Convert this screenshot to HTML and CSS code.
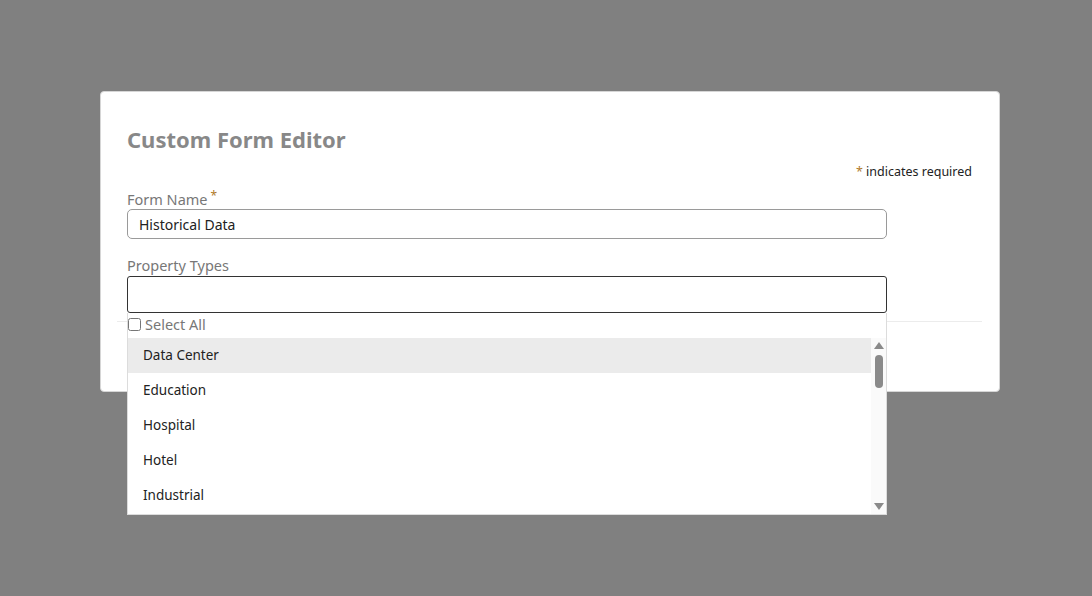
FILE: index.html
```html
<!DOCTYPE html>
<html>
<head>
<meta charset="utf-8">
<link rel="stylesheet" href="styles.css">
</head>
<body>
<div class="dialog">
  <h1 class="title">Custom Form Editor</h1>
  <div class="required-note"><span class="star">*</span> indicates required</div>
  <div class="field">
    <label class="label">Form Name<sup class="star">*</sup></label>
    <input class="text-input" type="text" value="Historical Data">
  </div>
  <div class="field field-types">
    <label class="label">Property Types</label>
    <div class="multi-input"></div>
    <div class="dropdown">
      <label class="select-all"><input type="checkbox" class="check"> Select All</label>
      <div class="list-wrap">
        <ul class="options">
          <li class="option active">Data Center</li>
          <li class="option">Education</li>
          <li class="option">Hospital</li>
          <li class="option">Hotel</li>
          <li class="option">Industrial</li>
        </ul>
        <div class="scrollbar">
          <span class="arrow-up"></span>
          <span class="thumb"></span>
          <span class="arrow-down"></span>
        </div>
      </div>
    </div>
  </div>
  <div class="separator"></div>
</div>
</body>
</html>
```

FILE: styles.css
```css
html, body {
  margin: 0;
  padding: 0;
}
body {
  background: #808080;
  font-family: "Noto Sans", "Open Sans", sans-serif;
  height: 596px;
  overflow: hidden;
}
.dialog {
  box-sizing: border-box;
  margin: 91px 0 0 100px;
  width: 900px;
  height: 301px;
  background: #fff;
  border: 1px solid #d6d6d6;
  border-radius: 4px;
  padding: 32px 27px 0 26px;
}
.title {
  margin: 0;
  font-size: 22px;
  line-height: 30px;
  font-weight: 700;
  color: #888;
}
.required-note {
  margin-top: 9px;
  text-align: right;
  font-size: 12.5px;
  line-height: 18px;
  color: #222;
}
.star {
  color: #b07a2a;
}
.field {
  width: 760px;
  position: relative;
}
.label {
  display: block;
  font-size: 14.5px;
  line-height: 20px;
  color: #777;
  margin-top: 8px;
}
.label sup {
  font-size: 12px;
  line-height: 0;
  margin-left: 3px;
  vertical-align: 5px;
}
.text-input {
  box-sizing: border-box;
  display: block;
  width: 760px;
  height: 30px;
  margin: 0;
  padding: 0 11px;
  border: 1px solid #9a9a9a;
  border-radius: 5px;
  font-family: inherit;
  font-size: 14px;
  color: #222;
  outline: none;
}
.field-types .label {
  margin-top: 16px;
}
.multi-input {
  box-sizing: border-box;
  height: 37px;
  margin-top: 1px;
  border: 1px solid #333;
  border-radius: 3px;
  background: #fff;
}
.dropdown {
  position: absolute;
  top: 100%;
  left: 0;
  width: 760px;
  box-sizing: border-box;
  border: 1px solid #dcdcdc;
  border-top: none;
  background: #fff;
  z-index: 5;
}
.select-all {
  display: flex;
  align-items: center;
  box-sizing: border-box;
  height: 25px;
  padding-bottom: 3px;
  font-size: 14.5px;
  color: #777;
  gap: 4px;
}
.check {
  margin: 0;
  width: 13px;
  height: 13px;
}
.list-wrap {
  display: flex;
  height: 176px;
}
.options {
  flex: 1;
  list-style: none;
  margin: 0;
  padding: 0;
}
.option {
  height: 35px;
  line-height: 35px;
  padding-left: 15px;
  font-size: 13.5px;
  color: #222;
}
.option.active {
  background: #ebebeb;
}
.scrollbar {
  width: 15px;
  background: #fafafa;
  display: flex;
  flex-direction: column;
  align-items: center;
}
.arrow-up {
  margin-top: 4px;
  width: 0;
  height: 0;
  border-left: 5px solid transparent;
  border-right: 5px solid transparent;
  border-bottom: 7px solid #8a8a8a;
}
.thumb {
  margin-top: 6px;
  width: 8px;
  height: 33px;
  border-radius: 4px;
  background: #8a8a8a;
}
.arrow-down {
  margin-top: auto;
  margin-bottom: 4px;
  width: 0;
  height: 0;
  border-left: 5px solid transparent;
  border-right: 5px solid transparent;
  border-top: 7px solid #8a8a8a;
}
.separator {
  height: 1px;
  background: #ececec;
  margin: 8px -10px 0 -10px;
}
```
